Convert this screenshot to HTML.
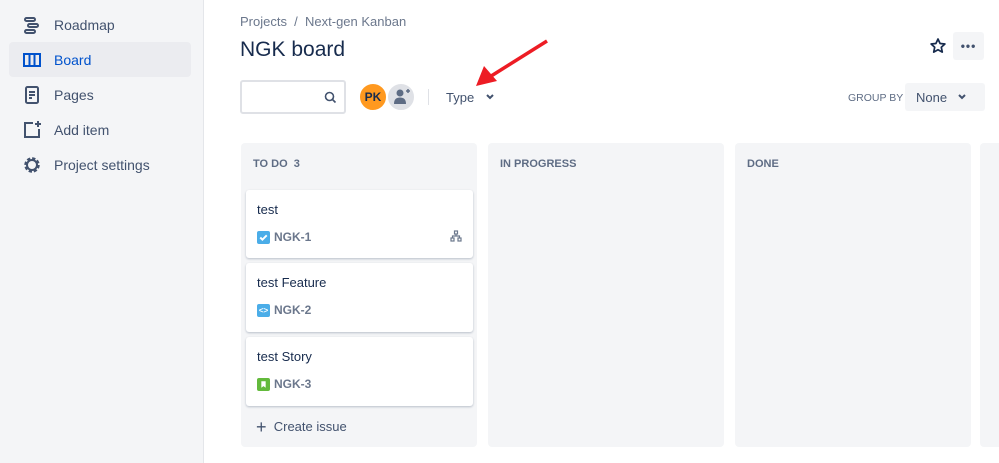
<!DOCTYPE html>
<html><head><style>
*{box-sizing:border-box;margin:0;padding:0}
body{width:999px;height:463px;overflow:hidden;background:#fff;font-family:"Liberation Sans",sans-serif;color:#172b4d;position:relative}
.sb{position:absolute;left:0;top:0;width:204px;height:463px;background:#f4f5f7;border-right:1px solid #e4e6ea}
.ni{position:absolute;left:9px;width:182px;height:35px;border-radius:4px;font-size:14px;color:#42526e}
.ni span{position:absolute;left:45px;top:10px}
.ni svg{position:absolute;left:13px;top:8px}
.ab{position:absolute}
.col{position:absolute;top:143px;width:236px;height:304px;background:#f4f5f7;border-radius:4px}
.ch{position:absolute;left:12px;top:15px;font-size:11px;font-weight:bold;color:#5e6c84}
.card{position:absolute;left:5px;width:227px;background:#fff;border-radius:3px;box-shadow:0 1px 2px rgba(9,30,66,.25)}
.card .t{position:absolute;left:11px;top:12px;font-size:13px}
.card .k{position:absolute;left:28px;top:40px;font-size:12px;font-weight:bold;color:#6b778c}
.card .ic{position:absolute;left:11px;top:41px;width:13px;height:13px;border-radius:2px}
</style></head><body>
<div class="sb">
 <div class="ni" style="top:7px"><svg width="20" height="20" viewBox="0 0 20 20" fill="none" stroke="#42526e" stroke-width="2"><rect x="3" y="3" width="10" height="3" rx="1.5"/><rect x="6" y="9" width="10" height="3" rx="1.5"/><rect x="3" y="15" width="10" height="3" rx="1.5"/></svg><span>Roadmap</span></div>
 <div class="ni" style="top:42px;background:#ebecf0;color:#0052cc"><svg width="20" height="20" viewBox="0 0 20 20" fill="none" stroke="#0052cc" stroke-width="2"><rect x="2" y="4" width="16" height="12"/><path d="M7.5 4v12M12.5 4v12"/></svg><span>Board</span></div>
 <div class="ni" style="top:77px"><svg width="20" height="20" viewBox="0 0 20 20" fill="none" stroke="#42526e" stroke-width="2"><rect x="4" y="2" width="12" height="16" rx="1.5"/><path d="M7 7h6M7 10h6M7 13h3"/></svg><span>Pages</span></div>
 <div class="ni" style="top:112px"><svg width="20" height="20" viewBox="0 0 20 20" fill="none" stroke="#42526e" stroke-width="2"><path d="M11 3H3v14h14V9"/><path d="M16 1v6M13 4h6"/></svg><span>Add item</span></div>
 <div class="ni" style="top:147px"><svg width="20" height="20" viewBox="0 0 20 20"><circle cx="10" cy="10" r="6" fill="none" stroke="#42526e" stroke-width="3.5" stroke-dasharray="3 1.7"/><circle cx="10" cy="10" r="5" fill="none" stroke="#42526e" stroke-width="2"/></svg><span>Project settings</span></div>
</div>
<div class="ab" style="left:240px;top:14px;font-size:13px;color:#6b778c">Projects &nbsp;/&nbsp; Next-gen Kanban</div>
<div class="ab" style="left:240px;top:38px;font-size:21px;font-weight:500">NGK board</div>
<svg class="ab" style="left:929px;top:37px" width="18" height="18" viewBox="0 0 18 18"><path d="M9 2l2.1 4.5 4.8.5-3.6 3.3 1 4.8L9 12.7l-4.3 2.4 1-4.8L2.1 7l4.8-.5z" fill="none" stroke="#172b4d" stroke-width="1.7" stroke-linejoin="round"/></svg>
<div class="ab" style="left:953px;top:32px;width:31px;height:28px;background:#f4f5f7;border-radius:3px;font-size:12px;font-weight:bold;text-align:center;line-height:28px;color:#42526e;letter-spacing:1px">•••</div>
<div class="ab" style="left:240px;top:80px;width:106px;height:34px;border:2px solid #dfe1e6;border-radius:3px"><svg style="position:absolute;right:7px;top:9px" width="13" height="13" viewBox="0 0 13 13" fill="none" stroke="#42526e" stroke-width="1.6"><circle cx="5.5" cy="5.5" r="4"/><path d="M8.5 8.5l3 3"/></svg></div>
<div class="ab" style="left:358px;top:82px;width:30px;height:30px;border-radius:50%;background:#ff991f;border:2px solid #fff;font-size:12px;font-weight:bold;text-align:center;line-height:26px;color:#172b4d">PK</div>
<div class="ab" style="left:386px;top:82px;width:30px;height:30px;border-radius:50%;background:#dfe1e6;border:2px solid #fff"><svg width="26" height="26" viewBox="0 0 26 26" fill="#5e6c84"><circle cx="12" cy="9" r="3.5"/><path d="M6 20c0-5 2.5-6.5 6-6.5s6 1.5 6 6.5z"/><path d="M18 7h4M20 5v4" stroke="#5e6c84" stroke-width="1.5"/></svg></div>
<div class="ab" style="left:428px;top:89px;width:1px;height:16px;background:#dfe1e6"></div>
<div class="ab" style="left:446px;top:90px;font-size:13px;color:#42526e">Type</div>
<svg class="ab" style="left:485px;top:93px" width="10" height="8" viewBox="0 0 10 8"><path d="M2 2l3 3 3-3" fill="none" stroke="#42526e" stroke-width="2"/></svg>
<svg class="ab" style="left:470px;top:36px" width="85" height="52" viewBox="0 0 85 52"><path d="M77 5L18 42" stroke="#ed1c24" stroke-width="3.5"/><path d="M6 50L14 30 27 45z" fill="#ed1c24"/></svg>
<div class="ab" style="left:848px;top:92px;font-size:10.5px;color:#5e6c84">GROUP BY</div>
<div class="ab" style="left:905px;top:83px;width:80px;height:28px;background:#f4f5f7;border-radius:3px"><span style="position:absolute;left:11px;top:7px;font-size:13px;color:#42526e">None</span><svg style="position:absolute;left:52px;top:10px" width="10" height="8" viewBox="0 0 10 8"><path d="M2 2l3 3 3-3" fill="none" stroke="#42526e" stroke-width="2"/></svg></div>
<div class="col" style="left:241px"><div class="ch">TO DO &nbsp;3</div>
 <div class="card" style="top:47px;height:68px"><div class="t">test</div><div class="ic" style="background:#4bade8"><svg width="13" height="13" viewBox="0 0 12 12"><path d="M3 6l2 2 4-4" fill="none" stroke="#fff" stroke-width="1.8"/></svg></div><div class="k">NGK-1</div><svg style="position:absolute;left:204px;top:40px" width="12" height="12" viewBox="0 0 12 12" fill="none" stroke="#6b778c" stroke-width="1.2"><rect x="4.5" y="1" width="3" height="3"/><rect x="1" y="8" width="3" height="3"/><rect x="8" y="8" width="3" height="3"/><path d="M6 4v2M2.5 8V6h7v2"/></svg></div>
 <div class="card" style="top:120px;height:69px"><div class="t">test Feature</div><div class="ic" style="background:#4bade8;color:#fff;font-size:8px;text-align:center;line-height:13px;font-weight:bold">&lt;&gt;</div><div class="k">NGK-2</div></div>
 <div class="card" style="top:194px;height:69px"><div class="t">test Story</div><div class="ic" style="background:#63ba3c"><svg width="13" height="13" viewBox="0 0 12 12"><path d="M4 3h4v6L6 7.5 4 9z" fill="#fff"/></svg></div><div class="k">NGK-3</div></div>
 <div class="ab" style="left:15px;top:272px;font-size:13px;color:#42526e"><span style="font-size:18px;position:relative;top:2px">+</span>&nbsp; Create issue</div>
</div>
<div class="col" style="left:488px"><div class="ch">IN PROGRESS</div></div>
<div class="col" style="left:735px"><div class="ch">DONE</div></div>
<div class="col" style="left:980px;width:30px"></div>
</body></html>
